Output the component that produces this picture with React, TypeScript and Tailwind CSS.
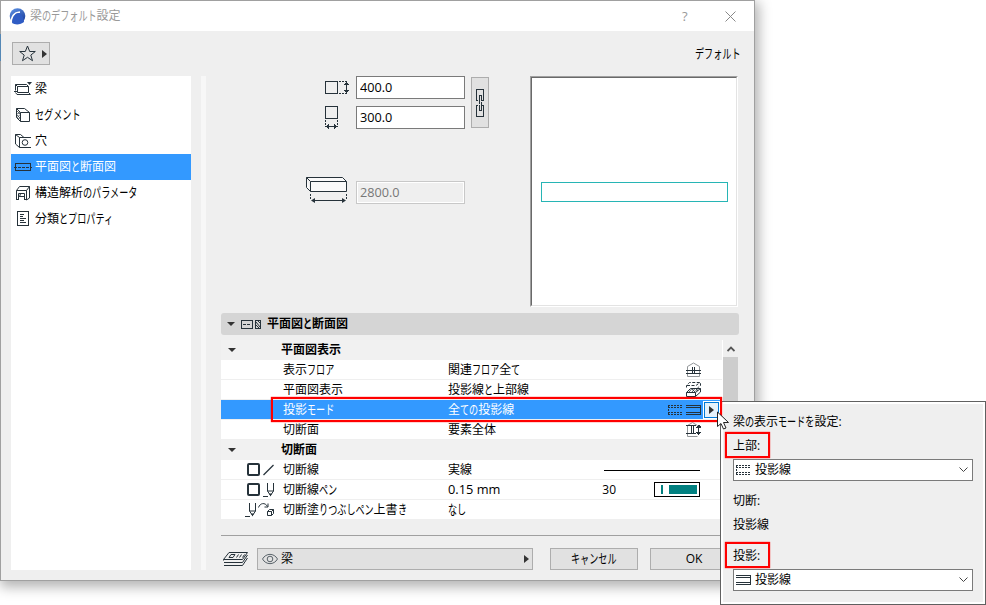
import type { ReactNode } from "react";

import clsx from "clsx";

type IconName =
  | "beam"
  | "segment"
  | "hole"
  | "plan"
  | "structure"
  | "document";

const NAV_ITEMS: { icon: IconName; label: string; active?: boolean }[] = [
  { icon: "beam", label: "梁" },
  { icon: "segment", label: "セグメント" },
  { icon: "hole", label: "穴" },
  { icon: "plan", label: "平面図と断面図", active: true },
  { icon: "structure", label: "構造解析のパラメータ" },
  { icon: "document", label: "分類とプロパティ" },
];

const INK = "#26323a";

// Kana runs are set narrower than kanji, as in the Windows UI fonts.
function Kana({ text }: { text: string }) {
  return (
    <span className="whitespace-nowrap">
      {text.split(/([\u3040-\u30ff]+)/).map((part, index) =>
        index % 2 === 1 ? (
          <span
            key={index}
            className="inline-block origin-left scale-x-[0.7] text-[13px] leading-none"
            style={{ width: `${part.length * 0.7}em` }}
          >
            {part}
          </span>
        ) : (
          part
        ),
      )}
    </span>
  );
}

function Svg({
  w,
  h,
  smooth,
  className,
  children,
}: {
  w: number;
  h: number;
  smooth?: boolean;
  className?: string;
  children: ReactNode;
}) {
  return (
    <svg
      width={w}
      height={h}
      viewBox={`0 0 ${w} ${h}`}
      fill="none"
      stroke={INK}
      shapeRendering={smooth ? "auto" : "crispEdges"}
      className={clsx("shrink-0", className)}
    >
      {children}
    </svg>
  );
}

function NavIcon({ name }: { name: IconName }) {
  switch (name) {
    case "beam":
      return (
        <Svg w={18} h={16} smooth>
          <path d="M3.5 5.5h11v6h-11zM3.5 5.5l-2-2v6M1.5 3.5h11l2 2M0 10.500h3.500M14.5 11.5l2 2H3l-1.500-2" />
          <path d="M13 1h5l-2.5 3z" fill={INK} stroke="none" />
        </Svg>
      );
    case "segment":
      return (
        <Svg w={18} h={16} smooth>
          <path d="M6.5 5.5h9v9h-9zM6.5 5.5l-4-4h8l5 4M2.5 1.5v9l4 4" />
          <path d="M3 4l3 3M3 8l3 3M3 7l3-1.500M3 11l3-3.500M4 12l2-1" strokeWidth="0.7" />
        </Svg>
      );
    case "hole":
      return (
        <Svg w={18} h={16} smooth>
          <path d="M17 4.500H5.500v10H17M5.500 4.500l-4-3v9.500l4 3.500M1.500 1.500h5l3.500 3" />
          <circle cx="11" cy="9.500" r="2.800" />
        </Svg>
      );
    case "plan":
      return (
        <Svg w={18} h={16}>
          <path d="M1.500 4.500h15v7h-15z" />
          <path d="M0 8.500h18" strokeDasharray="3 1" />
        </Svg>
      );
    case "structure":
      return (
        <Svg w={18} h={16} smooth>
          <path d="M2.500 15V5.500l3-4h10l-3 4h-10M12.500 15V5.500M15.500 1.500v11.500l-3 2M4.500 15V8.500h6V15M5.500 12l1-3.500M5.500 11.500h5M2 14.500h3M10 14.500h3" />
        </Svg>
      );
    case "document":
      return (
        <Svg w={18} h={16}>
          <path d="M3.500 .5h11v14h-11zM6 3.500h4M6 5.500h3M6 7.500h6M6 9.500h4M6 11.500h6" />
        </Svg>
      );
  }
}

function TriangleRight() {
  return (
    <svg width="5" height="8" viewBox="0 0 5 8" className="shrink-0">
      <path d="M0 0l5 4-5 4z" fill="#333" />
    </svg>
  );
}

function TriangleDown() {
  return (
    <svg width="8" height="4" viewBox="0 0 8 4" className="shrink-0">
      <path d="M0 0h8L4 4z" fill="#333" />
    </svg>
  );
}

function StoreyIcon() {
  return (
    <Svg w={15} h={15}>
      <path
        d="M1.500 14.500v-10l6-3.500 6 3.500v10z"
        stroke="#929699"
        shapeRendering="auto"
      />
      <path d="M0 8.500h15M0 11.500h15M6.500 5v6M8.500 5v6" />
    </Svg>
  );
}

function ProjectionIcon() {
  return (
    <Svg w={15} h={15} smooth>
      <path d="M.5 10.500h9v4h-9zM.5 10.500l4-4h10l-5 4M14.500 6.500v3.500l-5 4.500" />
      <path d="M3 10l3-3.500M6 10l3-3.500M9 9.500l3-3M6 7l3 3M10 7l2 2" strokeWidth="0.8" />
      <path d="M.5 5.500v-2l3-3h11v3l-3 2.500M1 3.500h9l4-3" strokeDasharray="3 1.500" />
    </Svg>
  );
}

function CutIcon() {
  return (
    <Svg w={15} h={15}>
      <path
        d="M1.500 14.500v-11l5-3 5 3M1.500 14.500h10"
        stroke="#929699"
        shapeRendering="auto"
      />
      <path d="M0 3.500h10M0 11.500h10M5.500 3v8M7.500 3v8M12.500 4v7" />
      <path d="M9.500 5.500l3-3 3 3zM9.500 10l3 3 3-3z" fill={INK} stroke="none" />
    </Svg>
  );
}

function DottedBeam() {
  return (
    <Svg w={15} h={12}>
      <path d="M0 1.500h15M0 3.500h15M0 8.500h15M0 10.500h15" strokeDasharray="2 1" />
      <path d="M.5 1v2M.5 5v2M.5 9v2" />
    </Svg>
  );
}

function SolidBeam() {
  return (
    <Svg w={15} h={12}>
      <path d="M0 1.500h14.500v9H0M0 3.500h14M0 8.500h14" />
    </Svg>
  );
}

function PenIcon() {
  return (
    <Svg w={11} h={14} smooth>
      <path d="M4.500 0v8l3 4.500 3-4.500V0M4.500 8h6M0 13.500h5" />
      <path d="M6 10.500h3l-1.500 3z" fill={INK} stroke="none" />
    </Svg>
  );
}

function Checkbox() {
  return (
    <span className="h-[13px] w-[13px] shrink-0 rounded-[2px] border-2 border-[#26323a] bg-white" />
  );
}

function GroupRow({ label }: { label: string }) {
  return (
    <div className="flex h-5 items-center bg-[#f1f1f1] pl-[7px] font-bold">
      <TriangleDown />
      <span className="ml-[45px]">
        <Kana text={label} />
      </span>
    </div>
  );
}

function Row({
  label,
  value,
  icons,
  active,
  children,
}: {
  label: string;
  value: ReactNode;
  icons?: ReactNode;
  active?: boolean;
  children?: ReactNode;
}) {
  return (
    <div
      className={clsx(
        "flex h-5 items-center border-b border-[#efefef]",
        active ? "bg-[#3399ff] text-white" : "bg-white",
      )}
    >
      <div className="flex w-[62px] shrink-0 items-center pl-[26px]">{icons}</div>
      <span className="w-[165px] shrink-0">
        <Kana text={label} />
      </span>
      <span className="flex-1">
        {typeof value === "string" ? <Kana text={value} /> : value}
      </span>
      {children}
    </div>
  );
}

function DimensionField({
  value,
  disabled,
}: {
  value: string;
  disabled?: boolean;
}) {
  return (
    <input
      readOnly
      disabled={disabled}
      value={value}
      className={clsx(
        "h-[23px] w-[109px] shrink-0 border pb-px pl-[3px] text-[12.7px] outline-none",
        disabled
          ? "border-[#c8c8c8] bg-[#efefef] text-[#777] shadow-[inset_0_0_0_1px_#fff]"
          : "border-[#7a7a7a] bg-white text-black",
      )}
    />
  );
}

function PopupSelect({ icon }: { icon: ReactNode }) {
  return (
    <div className="flex h-[22px] w-[240px] items-center border border-[#7a7a7a] bg-white pr-1 pl-[2px]">
      {icon}
      <span className="ml-1 flex-1">投影線</span>
      <Svg w={9} h={6} smooth>
        <path d="M.5 .5l4 4 4-4" stroke="#444" />
      </Svg>
    </div>
  );
}

function DisplayModePopup() {
  return (
    <div className="absolute top-[401px] left-[720px] h-[204px] w-[266px] border border-[#606060] bg-white p-[2px]">
      <div className="flex h-full flex-col bg-[#efefef] pl-[10px]">
        <div className="mt-2 h-5 leading-5">
          <Kana text="梁の表示モードを設定:" />
        </div>
        <div className="mt-1 h-5 leading-5">上部:</div>
        <div className="mt-[3px]">
          <PopupSelect icon={<DottedBeam />} />
        </div>
        <div className="mt-[10px] h-5 leading-5">切断:</div>
        <div className="mt-1 h-5 leading-5">投影線</div>
        <div className="mt-[11px] h-5 leading-5">投影:</div>
        <div className="mt-[3px]">
          <PopupSelect icon={<SolidBeam />} />
        </div>
      </div>
    </div>
  );
}

function TitleBar() {
  return (
    <div className="flex h-[30px] items-center bg-white pl-2 text-[#999]">
      <svg width="17" height="17" viewBox="0 0 17 17">
        <defs>
          <linearGradient id="logo" x1="0" y1="0" x2="0.6" y2="1">
            <stop offset="0" stopColor="#5f95e8" />
            <stop offset="1" stopColor="#1c3f9c" />
          </linearGradient>
        </defs>
        <circle cx="8.500" cy="8" r="7.800" fill="url(#logo)" />
        <path d="M2 16C2 9 5 4.500 11 4" stroke="#fff" strokeWidth="1.600" fill="none" />
        <path d="M3 15C4 8 6.500 5 9.500 5s5 4 5.500 9c-3.500 3-9 3-12 1z" fill="#2f5cc4" />
      </svg>
      <span className="ml-1 flex-1">
        <Kana text="梁のデフォルト設定" />
      </span>
      <span className="mr-[2px] w-2 text-[13px]">?</span>
      <svg width="11" height="11" viewBox="0 0 11 11" className="mr-[18px] ml-[33px]">
        <path d="M.5 .5l10 10M10.500 .5l-10 10" stroke="#888" />
      </svg>
    </div>
  );
}

function Sidebar() {
  return (
    <nav className="h-[494px] w-[180px] shrink-0 bg-white">
      {NAV_ITEMS.map((item) => (
        <div
          key={item.label}
          className={clsx(
            "flex h-[26px] items-center pl-[3px]",
            item.active && "bg-[#3399ff] text-white",
          )}
        >
          <NavIcon name={item.icon} />
          <span className="ml-[3px]">
            <Kana text={item.label} />
          </span>
        </div>
      ))}
    </nav>
  );
}

function GeometryPanel() {
  return (
    <div className="flex h-[237px] items-start">
      <div className="flex w-[244px] flex-col items-end">
        <div className="flex">
          <Svg w={25} h={23} className="mr-[6px]">
            <path d="M.5 5.500h12v12H.5z" />
            <path d="M14 5.500h7M14 17.500h7" strokeDasharray="2 1" />
            <path d="M21.500 7v9" />
            <path d="M19 9l2.500-4 2.500 4zM19 14l2.500 4 2.500-4z" fill={INK} stroke="none" />
          </Svg>
          <DimensionField value="400.0" />
        </div>
        <div className="mt-[7px] flex">
          <Svg w={25} h={24} className="mr-[6px]">
            <path d="M.5 .5h12v12H.5z" />
            <path d="M.5 14v6M12.500 14v6" strokeDasharray="2 1" />
            <path d="M2 20.500h9" />
            <path d="M4 18l-4 2.500 4 2.500zM9 18l4 2.500-4 2.500z" fill={INK} stroke="none" />
          </Svg>
          <DimensionField value="300.0" />
        </div>
        <div className="mt-[51px] flex">
          <Svg w={42} h={28} smooth className="-mt-[4px] mr-[8px]">
            <path d="M4.500 4.500h36v10h-36zM4.500 4.500l-4-4h36l4 4M.5 .5v10l4 4" fill="#fafafa" />
            <path d="M4.500 17v6M40.500 17v6" strokeDasharray="2 1" />
            <path d="M6 23.500h33" />
            <path d="M9 21l-4 2.500 4 2.500zM36 21l4 2.500-4 2.500z" fill={INK} stroke="none" />
          </Svg>
          <DimensionField value="2800.0" disabled />
        </div>
      </div>
      <button
        type="button"
        className="mt-px ml-[6px] flex h-[51px] w-[18px] items-center justify-center border border-[#adadad] bg-[#e1e1e1]"
      >
        <Svg w={8} h={28}>
          <path d="M2 11.500H.5V.5h7v11H6M2 16.500H.5v11h7v-11H6" />
          <path d="M3.500 6.500h2v5M3.500 6v8.500M3.500 16v5.500h2V13" />
        </Svg>
      </button>
      <div className="ml-[41px] h-[231px] w-[208px] shrink-0 border border-t-[#a0a0a0] border-r-white border-b-white border-l-[#a0a0a0]">
        <div className="flex h-full items-center border border-t-[#696969] border-r-[#e3e3e3] border-b-[#e3e3e3] border-l-[#696969] bg-white pr-2 pl-[9px]">
          <div className="h-5 w-full border border-[#27b5b5]" />
        </div>
      </div>
    </div>
  );
}

function SettingsTable() {
  return (
    <div className="mt-[5px] flex h-[180px]">
      <div className="w-[501px]">
        <GroupRow label="平面図表示" />
        <Row label="表示フロア" value="関連フロア全て">
          <span className="mr-[21px]">
            <StoreyIcon />
          </span>
        </Row>
        <Row label="平面図表示" value="投影線と上部線">
          <span className="mr-[21px]">
            <ProjectionIcon />
          </span>
        </Row>
        <Row label="投影モード" value="全ての投影線" active>
          <span className="flex gap-[3px]">
            <DottedBeam />
            <SolidBeam />
          </span>
          <span className="mr-[3px] ml-[3px] flex h-4 w-[15px] items-center justify-center border border-[#0078d7] bg-[#e5f1fb] shadow-[0_0_0_1px_#fff]">
            <TriangleRight />
          </span>
        </Row>
        <Row label="切断面" value="要素全体">
          <span className="mr-[21px]">
            <CutIcon />
          </span>
        </Row>
        <GroupRow label="切断面" />
        <Row
          label="切断線"
          value="実線"
          icons={
            <>
              <Checkbox />
              <Svg w={11} h={12} smooth className="ml-[3px]">
                <path d="M.5 11L10.500 1" strokeWidth="1.300" />
              </Svg>
            </>
          }
        >
          <span className="mt-px mr-[22px] h-px w-24 bg-black" />
        </Row>
        <Row
          label="切断線ペン"
          value={<span className="text-[12.8px]">0.15 mm</span>}
          icons={
            <>
              <Checkbox />
              <span className="ml-[3px]">
                <PenIcon />
              </span>
            </>
          }
        >
          <span className="mr-[38px]">30</span>
          <span className="mr-[22px] flex h-[15px] w-[46px] items-center border border-black bg-white pl-[6px]">
            <span className="h-[9px] w-[2px] bg-[#008080]" />
            <span className="ml-[6px] h-[9px] w-7 bg-[#008080]" />
          </span>
        </Row>
        <Row
          label="切断塗りつぶしペン上書き"
          value="なし"
          icons={
            <>
              <span className="-ml-[2px]">
                <PenIcon />
              </span>
              <Svg w={17} h={15} smooth className="ml-[2px]">
                <path d="M.5 5.500C2 1 7 0 9.500 4.500M6.500 5h3.500V1.500M9.500 9.500h4v4h-4zM9.500 9.500l2-2h4v4l-2 2M13.500 9.500l2-2" />
              </Svg>
            </>
          }
        />
      </div>
      <div className="flex w-[17px] flex-col border-x border-r-[#efefef] border-l-white">
        <div className="flex h-[17px] items-center justify-center">
          <Svg w={8} h={6} smooth>
            <path d="M.5 5L4 1.500 7.500 5" stroke="#555" strokeWidth="1.800" />
          </Svg>
        </div>
        <div className="flex-1 bg-[#cdcdcd]" />
      </div>
    </div>
  );
}

function Footer() {
  return (
    <div className="mt-3 flex h-[22px] items-center">
      <Svg w={26} h={16} smooth className="ml-[2px]">
        <path d="M6 1.500h18.500l-5 7H.5zM.5 8.500v1M1 11.500h18.500l5-7.500M1 14.500h18.500l5-7.500" />
        <path d="M8 3.500h4l-2 3H6zM15.500 3.500l-2 3M18.500 3.500l-2 3M21.500 3.500l-2 3" />
      </Svg>
      <div className="ml-2 flex h-[22px] w-[276px] items-center border border-[#adadad] bg-[#e1e1e1] pr-[3px] pl-1">
        <Svg w={16} h={12} smooth>
          <path d="M.5 6C4-.2 12-.2 15.500 6 12 12.200 4 12.200.5 6z" stroke="#59636a" />
          <circle cx="8" cy="6" r="2.800" stroke="#59636a" />
        </Svg>
        <span className="ml-[3px] flex-1">梁</span>
        <TriangleRight />
      </div>
      <button
        type="button"
        className="ml-[17px] h-[22px] w-[88px] border border-[#adadad] bg-[#e1e1e1]"
      >
        <Kana text="キャンセル" />
      </button>
      <button
        type="button"
        className="ml-3 h-[22px] w-[88px] border border-[#adadad] bg-[#e1e1e1]"
      >
        OK
      </button>
    </div>
  );
}

export default function App() {
  return (
    <div className="relative h-[605px] w-[986px] overflow-hidden bg-white font-['Open_Sans','Noto_Sans_CJK_JP',sans-serif] text-[12px] leading-[18px] text-black">
      <div className="h-[581px] w-[755px] border border-[#a0a0a0] bg-[#efefef] shadow-[2px_4px_12px_2px_rgba(0,0,0,0.3)]">
        <TitleBar />
        <div className="flex h-[45px] items-start justify-between pr-[14px] pl-[11px]">
          <button
            type="button"
            className="mt-[11px] flex h-[23px] w-[38px] items-center gap-[6px] border border-[#adadad] bg-[#e1e1e1] pl-[6px]"
          >
            <Svg w={17} h={17} smooth>
              <path d="M8.500 1l2.200 5.500h5.600l-4.500 3.600 1.700 5.600-5-3.400-5 3.400 1.700-5.600L.7 6.500h5.600z" />
            </Svg>
            <TriangleRight />
          </button>
          <span className="mt-[14px]">
            <Kana text="デフォルト" />
          </span>
        </div>
        <div className="flex pl-[10px]">
          <Sidebar />
          <div className="ml-[10px] w-[5px] shrink-0 bg-[#f7f7f7]" />
          <main className="ml-[15px] w-[518px] shrink-0">
            <GeometryPanel />
            <div className="flex h-[22px] items-center rounded-[3px] bg-[#d5d5d5] pl-[6px] font-bold">
              <TriangleDown />
              <Svg w={20} h={9} className="mt-px ml-[6px]">
                <path d="M.5 .5h11v8H.5zM14.500 .5h5v8h-5z" />
                <path d="M15 2l4 5M15 5l3 3M17 1l2 2" shapeRendering="auto" />
                <path d="M2 4.500h8" strokeDasharray="3 1" />
              </Svg>
              <span className="ml-[6px]">
                <Kana text="平面図と断面図" />
              </span>
            </div>
            <SettingsTable />
            <div className="mt-[15px] h-px bg-[#a0a0a0]" />
            <Footer />
          </main>
        </div>
      </div>

      <div className="absolute top-[34px] left-0 h-[27px] w-px bg-[#5487b5]" />
      <DisplayModePopup />

      <div className="absolute top-[397px] left-[271px] h-[25px] w-[451px] border-2 border-[#ff0000] shadow-[0_0_1px_#ff0000]" />
      <div className="absolute top-[432px] left-[725px] h-[26px] w-[45px] border-2 border-[#ff0000] shadow-[0_0_1px_#ff0000]" />
      <div className="absolute top-[542px] left-[725px] h-[26px] w-[45px] border-2 border-[#ff0000] shadow-[0_0_1px_#ff0000]" />
      <svg
        width="13"
        height="19"
        viewBox="0 0 13 19"
        className="absolute top-[411px] left-[717px]"
      >
        <path d="M.5 1v14.500l3.500-3 2.500 5.500 2.500-1-2.500-5.500H11.500z" fill="#fff" stroke="#222" />
      </svg>
    </div>
  );
}
